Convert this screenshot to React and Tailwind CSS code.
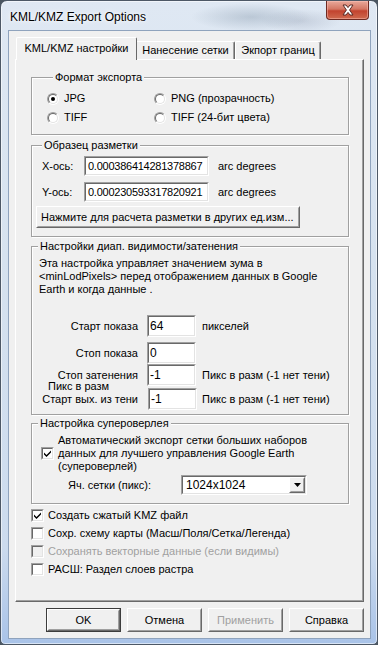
import React from "react";

const FONT = "font-['Liberation_Sans',Arial,sans-serif]";

function Sunken({ className = "", children }) {
  return (
    <div className={`border border-t-[#a0a0a0] border-l-[#a0a0a0] border-r-white border-b-white ${className}`}>
      <div className="w-full h-full border border-t-[#696969] border-l-[#696969] border-r-[#e3e3e3] border-b-[#e3e3e3] bg-white flex items-center overflow-hidden">
        {children}
      </div>
    </div>
  );
}

function Raised({ className = "", inner = "", children }) {
  return (
    <div className={`border border-t-white border-l-white border-r-[#696969] border-b-[#696969] bg-[#f0f0f0] ${className}`}>
      <div className={`w-full h-full border border-t-[#f0f0f0] border-l-[#f0f0f0] border-r-[#a0a0a0] border-b-[#a0a0a0] flex items-center justify-center ${inner}`}>
        {children}
      </div>
    </div>
  );
}

function Radio({ checked }) {
  return (
    <span className="w-[12px] h-[12px] shrink-0 rounded-full border border-t-[#a0a0a0] border-l-[#a0a0a0] border-r-white border-b-white flex">
      <span className="w-full h-full rounded-full border border-t-[#696969] border-l-[#696969] border-r-[#e3e3e3] border-b-[#e3e3e3] bg-white flex items-center justify-center">
        {checked && <span className="w-[4px] h-[4px] rounded-full bg-black" />}
      </span>
    </span>
  );
}

function Check({ checked, disabled }) {
  return (
    <span className="w-[13px] h-[13px] shrink-0 border border-t-[#a0a0a0] border-l-[#a0a0a0] border-r-white border-b-white flex">
      <span className={`w-full h-full border border-t-[#696969] border-l-[#696969] border-r-[#e3e3e3] border-b-[#e3e3e3] flex items-center justify-center ${disabled ? "bg-[#f0f0f0]" : "bg-white"}`}>
        {checked && (
          <svg width="9" height="9" viewBox="0 0 9 9">
            <path d="M1 3.5 L3.5 6 L8 1.5 L8 3.5 L3.5 8 L1 5.5 Z" fill="#000" />
          </svg>
        )}
      </span>
    </span>
  );
}

function Group({ title, className = "", children }) {
  return (
    <fieldset className={`ml-[15px] w-[318px] border border-[#a0a0a0] shadow-[inset_1px_1px_0_#fff,1px_1px_0_#fff] ${className}`}>
      <legend className="ml-[6px] px-[2px] leading-[13px] bg-[#f0f0f0]">{title}</legend>
      {children}
    </fieldset>
  );
}

export default function App() {
  return (
    <div className={`w-[378px] h-[645px] bg-[#4a5560] overflow-hidden text-[11px] text-black ${FONT}`}>
      <div className="w-[378px] h-[645px] rounded-t-[7px] rounded-b-[5px] border border-[#4d5866] bg-[linear-gradient(180deg,#dfe8f3_0%,#d6e2ef_40%,#ccdbee_85%,#a9c3e8_100%)] shadow-[inset_0_0_0_1px_rgba(255,255,255,0.55)] flex flex-col">
        {/* title bar */}
        <div className="h-[29px] flex items-start shrink-0 bg-[radial-gradient(ellipse_60px_14px_at_250px_16px,rgba(120,140,160,0.35),transparent),radial-gradient(ellipse_40px_12px_at_300px_20px,rgba(140,150,170,0.3),transparent)]">
          <span className="ml-[9px] mt-[9px] text-[12px] leading-[14px] [text-shadow:0_0_6px_#fff,0_0_3px_#fff] font-['Liberation_Sans',Arial,sans-serif]">
            KML/KMZ Export Options
          </span>
          <div className="ml-auto mr-[8px] w-[43px] h-[19px] rounded-b-[4px] border border-t-0 border-[#6e2a22] bg-[linear-gradient(180deg,#e9a99b_0%,#d47764_45%,#c2432f_55%,#cf6a4f_100%)] shadow-[inset_0_0_0_1px_rgba(255,200,190,0.45)] flex items-center justify-center">
            <svg width="14" height="12" viewBox="0 0 14 12">
              <path d="M2 1 L5 1 L7 3.6 L9 1 L12 1 L8.6 6 L12 11 L9 11 L7 8.4 L5 11 L2 11 L5.4 6 Z" fill="#fff" stroke="#5a2a25" strokeWidth="1" />
            </svg>
          </div>
        </div>

        {/* client area */}
        <div className="ml-[7px] w-[363px] h-[609px] border border-[#8fa3bd] bg-[#f0f0f0] flex flex-col px-[6px] pt-[6px]">
          {/* tabs */}
          <div className="h-[23px] flex items-end pl-[1px] relative z-10">
            <div className="w-[121px] h-[23px] bg-[#f0f0f0] border-l border-t border-white rounded-tl-[2px] rounded-tr-[2px] border-r border-r-[#696969] flex items-center justify-center pb-[2px]">
              <span className="whitespace-nowrap">KML/KMZ настройки</span>
            </div>
            <div className="w-[98px] h-[18px] mb-[1px] border-t border-white rounded-tr-[2px] border-r border-r-[#696969] shadow-[inset_-1px_0_0_#a0a0a0] flex items-center justify-center">
              <span className="whitespace-nowrap">Нанесение сетки</span>
            </div>
            <div className="w-[86px] h-[18px] mb-[1px] border-t border-l border-white rounded-tr-[2px] rounded-tl-[2px] border-r border-r-[#696969] shadow-[inset_-1px_0_0_#a0a0a0] flex items-center justify-center">
              <span className="whitespace-nowrap">Экпорт границ</span>
            </div>
          </div>

          {/* tab panel */}
          <div className="-mt-[1px] w-[349px] h-[543px] border border-t-white border-l-white border-r-[#696969] border-b-[#696969] shadow-[inset_-1px_-1px_0_#a0a0a0] flex flex-col">
            <Group title="Формат экспорта" className="mt-[11px] pb-[7px] pl-[15px] pt-[5px]">
              <div className="flex flex-col">
                <div className="h-[19px] flex items-center">
                  <div className="w-[107px] flex items-center gap-[5px]"><Radio checked /><span>JPG</span></div>
                  <div className="flex items-center gap-[5px]"><Radio /><span>PNG (прозрачность)</span></div>
                </div>
                <div className="h-[19px] flex items-center">
                  <div className="w-[107px] flex items-center gap-[5px]"><Radio /><span>TIFF</span></div>
                  <div className="flex items-center gap-[5px]"><Radio /><span>TIFF (24-бит цвета)</span></div>
                </div>
              </div>
            </Group>

            <Group title="Образец разметки" className="mt-[4px] pt-[4px] pb-[8px] pl-[4px]">
              <div className="flex flex-col">
                <div className="h-[20px] flex items-center ml-[6px]">
                  <span className="w-[42px]">X-ось:</span>
                  <Sunken className="w-[125px] h-[20px]"><span className="pl-[2px] text-[11px] tracking-[-0.25px] whitespace-nowrap">0.000386414281378867</span></Sunken>
                  <span className="ml-[9px]">arc degrees</span>
                </div>
                <div className="h-[20px] mt-[6px] flex items-center ml-[6px]">
                  <span className="w-[42px]">Y-ось:</span>
                  <Sunken className="w-[125px] h-[20px]"><span className="pl-[2px] text-[11px] tracking-[-0.25px] whitespace-nowrap">0.000230593317820921</span></Sunken>
                  <span className="ml-[9px]">arc degrees</span>
                </div>
                <Raised className="mt-[4px] w-[264px] h-[22px]" inner="justify-start pl-[3px]">
                  <span className="whitespace-nowrap">Нажмите для расчета разметки в других ед.изм...</span>
                </Raised>
              </div>
            </Group>

            <Group title="Настройки диап. видимости/затенения" className="mt-[3px] pt-[4px] pb-[4px]">
              <div className="pl-[7px] leading-[13px] whitespace-nowrap">
                <div>Эта настройка управляет значением зума в</div>
                <div>&lt;minLodPixels&gt; перед отображением данных в Google</div>
                <div>Earth и когда данные .</div>
              </div>
              <div className="mt-[19px] flex flex-col">
                <div className="h-[22px] flex items-center">
                  <span className="w-[106px] text-right">Старт показа</span>
                  <Sunken className="ml-[9px] w-[49px] h-[22px]"><span className="pl-[1px] text-[12px]">64</span></Sunken>
                  <span className="ml-[6px]">пикселей</span>
                </div>
                <div className="h-[22px] mt-[5px] flex items-center">
                  <span className="w-[106px] text-right">Стоп показа</span>
                  <Sunken className="ml-[9px] w-[49px] h-[22px]"><span className="pl-[1px] text-[12px]">0</span></Sunken>
                </div>
                <div className="h-[22px] flex items-center">
                  <span className="w-[106px] text-right">Стоп затенения</span>
                  <Sunken className="ml-[9px] w-[49px] h-[22px]"><span className="pl-[1px] text-[12px]">-1</span></Sunken>
                  <span className="ml-[6px]">Пикс в разм (-1 нет тени)</span>
                </div>
                <div className="h-[22px] mt-[2px] flex items-center">
                  <div className="w-[106px] h-[22px] flex flex-col justify-end items-end">
                    <span className="self-start ml-[16px] leading-[13px] whitespace-nowrap">Пикс в разм</span>
                    <span className="leading-[13px] mb-[4px] whitespace-nowrap">Старт вых. из тени</span>
                  </div>
                  <Sunken className="ml-[10px] w-[49px] h-[22px]"><span className="pl-[1px] text-[12px]">-1</span></Sunken>
                  <span className="ml-[5px]">Пикс в разм (-1 нет тени)</span>
                </div>
              </div>
            </Group>

            <Group title="Настройка супероверлея" className="mt-[2px] pt-[4px] pb-[8px]">
              <div className="flex items-center pl-[9px]">
                <Check checked />
                <div className="ml-[4px] leading-[13px] whitespace-nowrap">
                  <div>Автоматический экспорт сетки больших наборов</div>
                  <div>данных для лучшего управления Google Earth</div>
                  <div>(супероверлей)</div>
                </div>
              </div>
              <div className="mt-[2px] h-[20px] flex items-center pl-[36px]">
                <span className="w-[113px]">Яч. сетки (пикс):</span>
                <Sunken className="w-[126px] h-[20px]">
                  <span className="pl-[3px] flex-1 text-[12px]">1024x1024</span>
                  <Raised className="w-[16px] h-[16px]">
                    <svg width="7" height="4" viewBox="0 0 7 4"><path d="M0 0 H7 L3.5 4 Z" fill="#000" /></svg>
                  </Raised>
                </Sunken>
              </div>
            </Group>

            <div className="mt-[2px] ml-[15px] flex flex-col">
              <div className="h-[18px] flex items-center gap-[4px]"><Check checked /><span>Создать сжатый KMZ файл</span></div>
              <div className="h-[18px] flex items-center gap-[4px]"><Check /><span>Сохр. схему карты (Масш/Поля/Сетка/Легенда)</span></div>
              <div className="h-[18px] flex items-center gap-[4px]"><Check disabled /><span className="text-[#a0a0a0]">Сохранять векторные данные (если видимы)</span></div>
              <div className="h-[18px] flex items-center gap-[4px]"><Check /><span>РАСШ: Раздел слоев растра</span></div>
            </div>
          </div>

          {/* buttons */}
          <div className="mt-[6px] w-[349px] flex justify-end gap-[6px]">
            <div className="w-[75px] h-[24px] border border-[#3c3c3c]">
              <Raised className="w-full h-full"><span>OK</span></Raised>
            </div>
            <Raised className="w-[75px] h-[24px]"><span>Отмена</span></Raised>
            <Raised className="w-[75px] h-[24px]"><span className="text-[#a0a0a0]">Применить</span></Raised>
            <Raised className="w-[75px] h-[24px]"><span>Справка</span></Raised>
          </div>
        </div>
      </div>
    </div>
  );
}
